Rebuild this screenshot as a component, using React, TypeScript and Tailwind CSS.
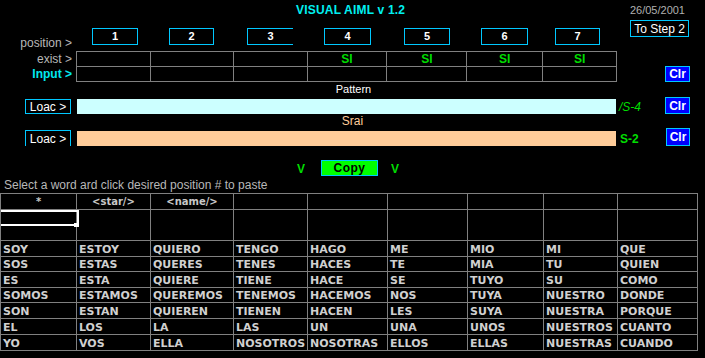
import React from 'react';

const cols = [76, 74, 83, 74, 80, 80, 76, 74, 80];

const words = [
  ['SOY', 'ESTOY', 'QUIERO', 'TENGO', 'HAGO', 'ME', 'MIO', 'MI', 'QUE'],
  ['SOS', 'ESTAS', 'QUERES', 'TENES', 'HACES', 'TE', 'MIA', 'TU', 'QUIEN'],
  ['ES', 'ESTA', 'QUIERE', 'TIENE', 'HACE', 'SE', 'TUYO', 'SU', 'COMO'],
  ['SOMOS', 'ESTAMOS', 'QUEREMOS', 'TENEMOS', 'HACEMOS', 'NOS', 'TUYA', 'NUESTRO', 'DONDE'],
  ['SON', 'ESTAN', 'QUIEREN', 'TIENEN', 'HACEN', 'LES', 'SUYA', 'NUESTRA', 'PORQUE'],
  ['EL', 'LOS', 'LA', 'LAS', 'UN', 'UNA', 'UNOS', 'NUESTROS', 'CUANTO'],
  ['YO', 'VOS', 'ELLA', 'NOSOTROS', 'NOSOTRAS', 'ELLOS', 'ELLAS', 'NUESTRAS', 'CUANDO'],
];

// position boxes: left margin + width
const posBoxes = [
  { n: '1', ml: 'ml-[16px]', w: 'w-[46px]', extra: '' },
  { n: '2', ml: 'ml-[31px]', w: 'w-[45px]', extra: '' },
  { n: '3', ml: 'ml-[33px]', w: 'w-[46px]', extra: 'border-r-0' },
  { n: '4', ml: 'ml-[31px]', w: 'w-[47px]', extra: '' },
  { n: '5', ml: 'ml-[33px]', w: 'w-[46px]', extra: '' },
  { n: '6', ml: 'ml-[31px]', w: 'w-[47px]', extra: '' },
  { n: '7', ml: 'ml-[27px]', w: 'w-[45px]', extra: '' },
];

const gridCols = [74, 83, 74, 80, 80, 76, 74];

const ClrButton = ({ className = '' }: { className?: string }) => (
  <div
    className={`flex items-center justify-center bg-[#0000ff] border border-[#00c8ff] text-white font-bold text-[12px] leading-none ${className}`}
  >
    Clr
  </div>
);

const LoacButton = ({ className = '' }: { className?: string }) => (
  <div
    className={`ml-[25px] w-[46px] flex items-center justify-center border border-[#00c8ff] text-white text-[12px] leading-none ${className}`}
  >
    Loac &gt;
  </div>
);

export default function App() {
  const rowHeights = ['h-[16px]', 'h-[15px]', 'h-[16px]', 'h-[15px]', 'h-[16px]', 'h-[16px]', 'h-[16px]'];

  return (
    <div className="w-[705px] h-[358px] bg-black overflow-hidden font-['Liberation_Sans',Arial,sans-serif] text-[#c0c0c0]">
      {/* Title */}
      <div className="flex h-[20px] items-center">
        <div className="ml-[296px] text-[12px] font-bold text-[#00f0f0] tracking-[0.2px]">VISUAL AIML v 1.2</div>
        <div className="ml-auto mr-[20px] text-[11px] text-[#b0b0b0]">26/05/2001</div>
      </div>

      {/* Positions */}
      <div className="flex h-[31px] items-start">
        <div className="w-[76px] self-end pb-[2px] pr-[4px] text-right text-[12px] leading-none text-[#b8b8b8]">
          position &gt;
        </div>
        {posBoxes.map((b) => (
          <div
            key={b.n}
            className={`${b.ml} ${b.w} ${b.extra} mt-[8px] h-[17px] flex items-center justify-center border border-[#00c8ff] text-white font-bold text-[11px] leading-none`}
          >
            {b.n}
          </div>
        ))}
        <div className="ml-[30px] w-[59px] h-[17px] flex items-center justify-center border border-[#00c8ff] text-white text-[12px] leading-none">
          To Step 2
        </div>
      </div>

      {/* Exist / Input grid */}
      <div className="flex h-[31px]">
        <div className="w-[76px] flex flex-col text-right pr-[4px] text-[12px]">
          <div className="h-[15px] leading-[16px] text-[#b8b8b8]">exist &gt;</div>
          <div className="h-[16px] leading-[16px] font-bold text-[#00e8f0]">Input &gt;</div>
        </div>
        <div className="w-[541px] border-t border-l border-[#808080]">
          {[0, 1].map((r) => (
            <div key={r} className="flex h-[15px]">
              {gridCols.map((w, i) => (
                <div
                  key={i}
                  style={{ width: w }}
                  className="border-r border-b border-[#808080] flex items-center justify-center text-[12px] font-bold text-[#00dd00] leading-none"
                >
                  {r === 0 && i >= 3 ? 'SI' : ''}
                </div>
              ))}
            </div>
          ))}
        </div>
        <ClrButton className="ml-[48px] w-[25px] h-[16px] self-end" />
      </div>

      {/* Pattern label */}
      <div className="h-[15px] flex items-center justify-center pl-[2px] text-[11px] text-white leading-none">Pattern</div>

      {/* Pattern row */}
      <div className="flex h-[17px] items-start">
        <LoacButton className="mt-[2px] h-[15px]" />
        <div className="ml-[6px] mt-[2px] w-[539px] h-[15px] bg-[#ccffff]" />
        <div className="ml-[3px] mt-[4px] text-[12px] italic text-[#00dd00] leading-none w-[40px]">/S-4</div>
        <ClrButton className="ml-[6px] w-[25px] h-[17px]" />
      </div>

      {/* Srai label */}
      <div className="h-[14px] flex items-center justify-center text-[12px] text-[#ffcc99] leading-none">Srai</div>

      {/* Srai row */}
      <div className="flex h-[18px] items-start">
        <LoacButton className="mt-[2px] h-[16px] border-b-0" />
        <div className="ml-[6px] mt-[3px] w-[539px] h-[15px] bg-[#ffcc99]" />
        <div className="ml-[4px] mt-[5px] text-[12px] font-bold text-[#00dd00] leading-none w-[40px]">S-2</div>
        <ClrButton className="ml-[6px] w-[24px] h-[18px]" />
      </div>

      {/* Copy row */}
      <div className="flex h-[16px] mt-[14px] items-center">
        <div className="ml-[297px] pt-[2px] text-[12px] font-bold text-[#00dd00] leading-none">V</div>
        <div className="ml-[16px] w-[57px] h-[16px] flex items-center justify-center bg-[#00ff00] border border-[#00c8ff] text-black font-bold text-[12px] tracking-[0.5px] leading-none">
          Copy
        </div>
        <div className="ml-[13px] pt-[2px] text-[12px] font-bold text-[#00dd00] leading-none">V</div>
      </div>

      {/* Hint */}
      <div className="h-[17px] pl-[4px] flex items-center text-[12px] leading-none text-[#b8b8b8]">
        Select a word ard click desired position # to paste
      </div>

      {/* Words table */}
      <div className="w-[698px] border-t border-l border-[#808080]">
        <div className="flex h-[16px]">
          {cols.map((w, i) => (
            <div
              key={i}
              style={{ width: w }}
              className="border-r border-b border-[#808080] flex items-center justify-center font-['DejaVu_Sans',sans-serif] text-[10px] font-bold text-[#c8c8c8] leading-none"
            >
              {i === 0 ? '*' : i === 1 ? '<star/>' : i === 2 ? '<name/>' : ''}
            </div>
          ))}
        </div>
        <div className="flex h-[31px] relative">
          {cols.map((w, i) => (
            <div key={i} style={{ width: w }} className="border-r border-b border-[#808080]" />
          ))}
          <div className="absolute left-0 top-0 w-[78px] h-[16px] border-t-2 border-b-2 border-r-2 border-white" />
          <div className="absolute left-[73px] top-[13px] w-[5px] h-[4px] bg-white" />
        </div>
        {words.map((row, r) => (
          <div key={r} className={`flex ${rowHeights[r]}`}>
            {row.map((w, i) => (
              <div
                key={i}
                style={{ width: cols[i] }}
                className="border-r border-b border-[#808080] flex items-center pl-[2px] pt-[1px] font-['DejaVu_Sans',sans-serif] text-[11px] font-bold text-[#d0d0d0] leading-none whitespace-nowrap overflow-hidden"
              >
                {w}
              </div>
            ))}
          </div>
        ))}
      </div>
    </div>
  );
}
